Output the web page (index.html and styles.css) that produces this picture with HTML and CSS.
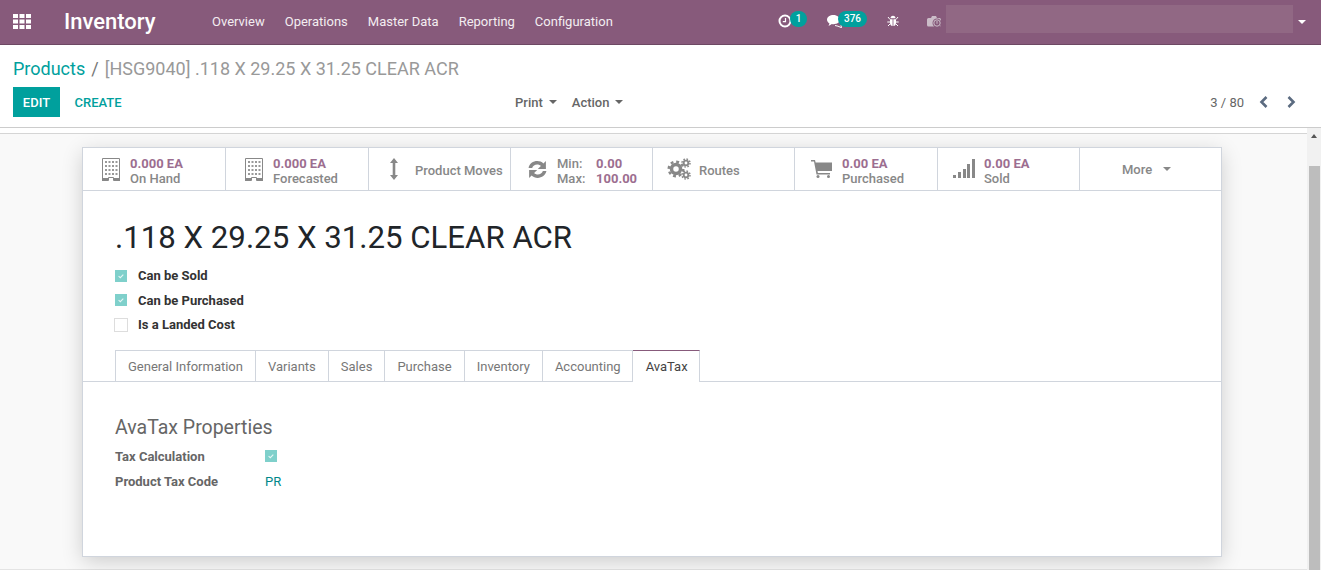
FILE: index.html
```html
<!DOCTYPE html>
<html lang="en">
<head>
<meta charset="utf-8">
<title>Inventory</title>
<link rel="stylesheet" href="styles.css">
</head>
<body>
<header class="navbar">
  <svg class="apps" viewBox="0 0 18 15" width="18" height="15"><g fill="#fff"><rect x="0" y="0" width="5" height="4"/><rect x="6.5" y="0" width="5" height="4"/><rect x="13" y="0" width="5" height="4"/><rect x="0" y="5.5" width="5" height="4"/><rect x="6.5" y="5.5" width="5" height="4"/><rect x="13" y="5.5" width="5" height="4"/><rect x="0" y="11" width="5" height="4"/><rect x="6.5" y="11" width="5" height="4"/><rect x="13" y="11" width="5" height="4"/></g></svg>
  <div class="brand">Inventory</div>
  <nav class="menu"><a>Overview</a><a>Operations</a><a>Master Data</a><a>Reporting</a><a>Configuration</a></nav>
  <div class="systray">
    <div class="tray tray-clock">
      <svg viewBox="0 0 14 14" width="14" height="14"><circle cx="7" cy="7" r="5.500" fill="none" stroke="#fff" stroke-width="2"/><path d="M7.500 4v3.600H4.800" fill="none" stroke="#fff" stroke-width="1.200"/></svg>
      <span class="badge badge-one">1</span>
    </div>
    <div class="tray tray-chat">
      <svg viewBox="0 0 16 13" width="16" height="13"><path d="M6.500 0C3 0 0 2 0 4.800c0 1.500 1 2.800 2.500 3.700L1.500 11l3.400-2c.5.1 1 .2 1.600.2 3.600 0 6.500-2 6.500-4.400S10.100 0 6.500 0z" fill="#fff"/><path d="M8 10.500l3 .7 3.500 1.500-.5-2.500c1-.7 1.500-1.500 1.500-2.500" fill="none" stroke="#fff"/></svg>
      <span class="badge badge-many">376</span>
    </div>
    <div class="tray tray-bug">
      <svg viewBox="0 0 12 12" width="12" height="12"><path d="M3.500 3.200a2.500 2.500 0 0 1 5 0zM3 4.200h2.600V11C3.800 10.800 3 9.500 3 8zM6.400 4.200H9V8c0 1.500-.8 2.800-2.600 3z" fill="#fff"/><path d="M1 2l2 2.500M11 2L9 4.500M.3 7H3M9 7h2.700M1 11l2-2M11 11L9 9" stroke="#fff" fill="none"/></svg>
    </div>
    <div class="tray tray-camera">
      <svg viewBox="0 0 15 13" width="15" height="13"><path d="M1.500 3H4l1-2h4l1 2h2.500A1.500 1.500 0 0 1 14 4.500V10a1.500 1.500 0 0 1-1.500 1.500h-11A1.500 1.500 0 0 1 0 10V4.500A1.500 1.500 0 0 1 1.500 3z" fill="#cbbcc8"/><circle cx="10" cy="8" r="4.500" fill="#875A7B"/><circle cx="10" cy="8" r="3.200" fill="none" stroke="#cbbcc8"/><path d="M10 6v2.800" stroke="#cbbcc8"/></svg>
    </div>
    <div class="user-blur"></div>
    <span class="caret caret-white"></span>
  </div>
</header>

<section class="control">
  <div class="crumbs"><a class="crumb-link">Products</a><span class="crumb-sep">/</span><span class="crumb-cur">[HSG9040] .118 X 29.25 X 31.25 CLEAR ACR</span></div>
  <div class="actions">
    <div class="action-left"><button class="btn-edit">EDIT</button><button class="btn-create">CREATE</button></div>
    <div class="action-mid"><span class="drop">Print<i class="caret"></i></span><span class="drop">Action<i class="caret"></i></span></div>
    <div class="pager"><span>3 / 80</span>
      <svg viewBox="0 0 10 12" width="10" height="12"><path d="M7.500 1L2.500 6l5 5" fill="none" stroke="#5b6b80" stroke-width="2.600"/></svg>
      <svg viewBox="0 0 10 12" width="10" height="12"><path d="M2.500 1l5 5-5 5" fill="none" stroke="#5b6b80" stroke-width="2.600"/></svg>
    </div>
  </div>
</section>

<main class="content">
  <div class="scroll-area">
    <article class="sheet">
      <div class="stats">
        <div class="stat"><svg class="ic ic-building" viewBox="0 0 18 23" width="18" height="23"><path d="M.5.500h17v22h-6v-3h-5v3h-6z" fill="#fff" stroke="#888"/><path d="M3 3h2v2H3zM6.500 3h2v2h-2zM10 3h2v2h-2zM13.500 3h2v2h-2zM3 7h2v2H3zM6.500 7h2v2h-2zM10 7h2v2h-2zM13.500 7h2v2h-2zM3 11h2v2H3zM6.500 11h2v2h-2zM10 11h2v2h-2zM13.500 11h2v2h-2zM3 15h2v2H3zM6.500 15h2v2h-2zM10 15h2v2h-2zM13.500 15h2v2h-2z" fill="#999"/><path d="M0 20h6v3H0zM12 20h6v3h-6z" fill="#888"/></svg><div class="two"><b>0.000 EA</b><span>On Hand</span></div></div>
        <div class="stat"><svg class="ic ic-building" viewBox="0 0 18 23" width="18" height="23"><path d="M.5.500h17v22h-6v-3h-5v3h-6z" fill="#fff" stroke="#888"/><path d="M3 3h2v2H3zM6.500 3h2v2h-2zM10 3h2v2h-2zM13.500 3h2v2h-2zM3 7h2v2H3zM6.500 7h2v2h-2zM10 7h2v2h-2zM13.500 7h2v2h-2zM3 11h2v2H3zM6.500 11h2v2h-2zM10 11h2v2h-2zM13.500 11h2v2h-2zM3 15h2v2H3zM6.500 15h2v2h-2zM10 15h2v2h-2zM13.500 15h2v2h-2z" fill="#999"/><path d="M0 20h6v3H0zM12 20h6v3h-6z" fill="#888"/></svg><div class="two"><b>0.000 EA</b><span>Forecasted</span></div></div>
        <div class="stat"><svg class="ic ic-arrows" viewBox="0 0 10 22" width="10" height="22"><path d="M5 0l4 5H6.300v12H9l-4 5-4-5h2.700V5H1z" fill="#888"/></svg><div class="one">Product Moves</div></div>
        <div class="stat"><svg class="ic ic-refresh" viewBox="0 0 20 20" width="21" height="21"><path d="M1.500 8.500C2.300 4.500 5.800 2 9.800 2c2.200 0 4.300.8 5.800 2.200L18 1.800V9.500h-7.700l2.900-2.900c-.9-.9-2.100-1.400-3.500-1.400-2.300 0-4.100 1.300-4.800 3.300zM18.500 11.500c-.8 4-4.300 6.500-8.300 6.500-2.200 0-4.300-.8-5.800-2.200L2 18.200v-7.700h7.700l-2.900 2.900c.9.900 2.100 1.400 3.500 1.400 2.300 0 4.100-1.300 4.800-3.300z" fill="#888"/></svg><div class="minmax"><span>Min:</span><b>0.00</b><span>Max:</span><b>100.00</b></div></div>
        <div class="stat"><svg class="ic ic-gears" viewBox="0 0 24 22" width="24" height="22"><g fill="none" stroke="#888"><circle cx="9" cy="11" r="4.500" stroke-width="3.500"/><circle cx="9" cy="11" r="7.300" stroke-width="2.400" stroke-dasharray="2.900 2.830"/><circle cx="19" cy="5" r="2.300" stroke-width="1.800"/><circle cx="19" cy="5" r="4" stroke-width="1.500" stroke-dasharray="1.600 1.540"/><circle cx="19" cy="17" r="2.300" stroke-width="1.800"/><circle cx="19" cy="17" r="4" stroke-width="1.500" stroke-dasharray="1.600 1.540"/></g></svg><div class="one">Routes</div></div>
        <div class="stat"><svg class="ic ic-cart" viewBox="0 0 21 18" width="21" height="18"><path d="M0 0h4l.6 2.500H21v8.500H6.500l.4 2H19v1.500H5.500L3 1.500H0z" fill="#888"/><circle cx="7" cy="16.500" r="1.500" fill="#888"/><circle cx="17.500" cy="16.500" r="1.500" fill="#888"/></svg><div class="two"><b>0.00 EA</b><span>Purchased</span></div></div>
        <div class="stat"><svg class="ic ic-signal" viewBox="0 0 22 20" width="22" height="20"><path d="M0 16h3v3H0zM5 13h3v6H5zM10 10h3v9h-3zM14 5h3v14h-3zM19 0h3v19h-3z" fill="#888"/></svg><div class="two"><b>0.00 EA</b><span>Sold</span></div></div>
        <div class="stat stat-more"><span>More</span><i class="caret"></i></div>
      </div>
      <div class="sheet-body">
        <h1 class="title">.118 X 29.25 X 31.25 CLEAR ACR</h1>
        <div class="options">
          <div class="opt"><span class="check on"><svg viewBox="0 0 12 12" width="12" height="12"><path d="M3.600 6.200l1.700 1.500 3-3" fill="none" stroke="#e6f6f5" stroke-width="1.100"/></svg></span><label>Can be Sold</label></div>
          <div class="opt"><span class="check on"><svg viewBox="0 0 12 12" width="12" height="12"><path d="M3.600 6.200l1.700 1.500 3-3" fill="none" stroke="#e6f6f5" stroke-width="1.100"/></svg></span><label>Can be Purchased</label></div>
          <div class="opt"><span class="check"></span><label>Is a Landed Cost</label></div>
        </div>
      </div>
      <div class="tabs">
        <a class="tab">General Information</a><a class="tab">Variants</a><a class="tab">Sales</a><a class="tab">Purchase</a><a class="tab">Inventory</a><a class="tab tab-accounting">Accounting</a><a class="tab tab-active">AvaTax</a>
      </div>
      <div class="pane">
        <h2 class="pane-title">AvaTax Properties</h2>
        <div class="field"><label>Tax Calculation</label><span class="check on"><svg viewBox="0 0 12 12" width="12" height="12"><path d="M3.600 6.200l1.700 1.500 3-3" fill="none" stroke="#e6f6f5" stroke-width="1.100"/></svg></span></div>
        <div class="field"><label>Product Tax Code</label><a class="val">PR</a></div>
      </div>
    </article>
  </div>
  <div class="scrollbar"><i class="sb-up"></i><div class="sb-thumb"></div></div>
</main>
</body>
</html>
```
FILE: styles.css
```css
* { box-sizing: border-box; }
html, body { margin: 0; height: 570px; overflow: hidden; }
body { font-family: Roboto, "Liberation Sans", sans-serif; font-size: 13px; color: #666; background: #fff; display: flex; flex-direction: column; }
svg { display: block; flex: none; }

.navbar { height: 45px; flex: none; background: #875A7B; border-bottom: 1px solid #6d4863; display: flex; align-items: center; color: #fff; }
.apps { margin: -2px 0 0 13px; }
.brand { font-size: 22px; font-weight: 500; margin: -1px 0 0 33px; width: 148px; }
.menu { display: flex; gap: 20px; margin-top: -1px; }
.menu a { color: #f3edf1; font-size: 13px; }
.systray { margin-left: auto; display: flex; align-items: center; height: 100%; position: relative; width: 543px; }
.tray { position: absolute; top: 14px; }
.tray-clock { left: 0; }
.tray-chat { left: 49px; top: 15px; }
.tray-bug { left: 109px; top: 15px; }
.tray-camera { left: 149px; top: 15px; }
.badge { position: absolute; background: #00A09D; color: #fff; font-size: 10px; font-weight: 500; line-height: 15px; height: 16px; border-radius: 8px; text-align: center; }
.badge-one { top: -3px; left: 12px; width: 17px; }
.badge-many { top: -4px; left: 11px; width: 29px; }
.user-blur { position: absolute; left: 168px; top: 5px; width: 347px; height: 28px; background: #916884; }
.caret { display: inline-block; width: 0; height: 0; border-left: 4px solid transparent; border-right: 4px solid transparent; border-top: 4px solid #666; }
.caret-white { position: absolute; left: 520px; top: 20px; border-top-color: #fff; }

.control { height: 83px; flex: none; border-bottom: 1px solid #ccc; background: #fff; padding: 0 25px 0 13px; }
.crumbs { font-size: 18px; height: 42px; padding-top: 12px; line-height: 24px; white-space: nowrap; }
.crumb-link { color: #00A09D; }
.crumb-sep { color: #777; margin: 0 6px; }
.crumb-cur { color: #999; }
.actions { display: grid; grid-template-columns: 502px auto 1fr; align-items: center; height: 30px; }
.action-left { display: flex; }
.btn-edit { width: 47px; height: 30px; border: 0; background: #00A09D; color: #fff; font: 500 13px Roboto, sans-serif; padding: 0; }
.btn-create { height: 30px; border: 0; background: none; color: #00A09D; font: 500 13px Roboto, sans-serif; padding: 0; margin-left: 14.500px; }
.action-mid { display: flex; gap: 15px; font-size: 13px; font-weight: 500; color: #666; }
.drop .caret { margin: 0 0 3px 6px; vertical-align: middle; }
.pager { display: flex; align-items: center; justify-content: flex-end; gap: 15px; color: #666; font-size: 13px; }
.pager svg + svg { margin-left: 2px; }

.content { flex: 1; display: flex; background: #fff; min-height: 0; }
.scroll-area { flex: 1; margin-top: 5px; background: #f9f9f9; padding: 13px 85px 0 82px; border-top: 1px solid #d5d5d5; border-bottom: 1px solid #e4e4e4; }
.scrollbar { width: 14px; background: #f1f1f1; position: relative; padding: 38px 1px 0 2px; }
.sb-up { position: absolute; left: 3.500px; top: 6px; width: 0; height: 0; border-left: 3.500px solid transparent; border-right: 3.500px solid transparent; border-bottom: 4px solid #555; }
.sb-thumb { height: 100%; background: #bdbdbd; }

.sheet { width: 1140px; height: 410px; background: #fff; border: 1px solid #d0d5dd; box-shadow: 0 5px 20px -1px rgba(0,0,0,.19); }
.stats { display: grid; grid-template-columns: 143px 143px 142px 142px 142px 143px 142px 1fr; height: 43px; border-bottom: 1px solid #d0d5dd; }
.stat { display: flex; align-items: center; border-right: 1px solid #d0d5dd; padding-left: 19px; color: #888; font-size: 13px; font-weight: 500; }
.stat:last-child { border-right: 0; }
.stat b { color: #9c6e90; font-weight: 700; }
.ic { margin-right: 11px; }
.ic-building { margin-right: 10px; }
.ic-arrows { margin: 0 16px 0 1px; }
.ic-refresh { margin: 0 9px 0 -3px; }
.ic-gears { margin: 0 8px 0 -5px; }
.ic-cart { margin: 0 10px 0 -3px; }
.ic-signal { margin: 0 9px 0 -4px; }
.two { display: flex; flex-direction: column; line-height: 15px; padding-top: 3px; }
.one { line-height: 15px; padding-top: 2px; }
.minmax { display: grid; grid-template-columns: 39px auto; line-height: 15px; padding-top: 3px; }
.stat-more { padding-left: 42px; gap: 11px; }
.stat-more .caret { border-top-color: #888; }

.sheet-body { padding: 28px 32px 0; }
.title { font-size: 31.200px; font-weight: 400; color: #212529; margin: 0; line-height: 38px; }
.options { margin-top: 6.300px; display: flex; flex-direction: column; }
.opt { height: 24.500px; display: flex; align-items: center; }
.opt label { font-weight: 700; font-size: 13px; color: #333; margin-left: 11px; }
.check { width: 12px; height: 12px; background: #7fd0cb; display: block; }
.opt .check:not(.on) { width: 14px; height: 14px; background: #fff; border: 1px solid #ddd; margin-left: -1px; margin-right: -1px; }

.tabs { display: flex; padding-left: 32px; margin-top: 13.200px; height: 32px; border-bottom: 1px solid #d0d5dd; }
.tab { height: 32px; padding: 0 12px; line-height: 32px; border: 1px solid #d0d5dd; border-left: 0; border-bottom: 0; color: #777; font-size: 13px; }
.tab:first-child { border-left: 1px solid #d0d5dd; }
.tab-accounting { padding-right: 11px; }
.tab-active { background: #fff; color: #444; border-top: 1px solid #875A7B; height: 32px; position: relative; margin-bottom: -1px; padding: 0 11px 0 13px; }

.pane { padding: 33px 32px 0; }
.pane-title { font-size: 19.500px; font-weight: 400; color: #666; margin: 0 0 3px; line-height: 26px; }
.field { display: flex; align-items: center; height: 25px; }
.field label { width: 150px; font-weight: 700; font-size: 13px; color: #666; }
.val { color: #00888a; font-size: 13px; }
```
